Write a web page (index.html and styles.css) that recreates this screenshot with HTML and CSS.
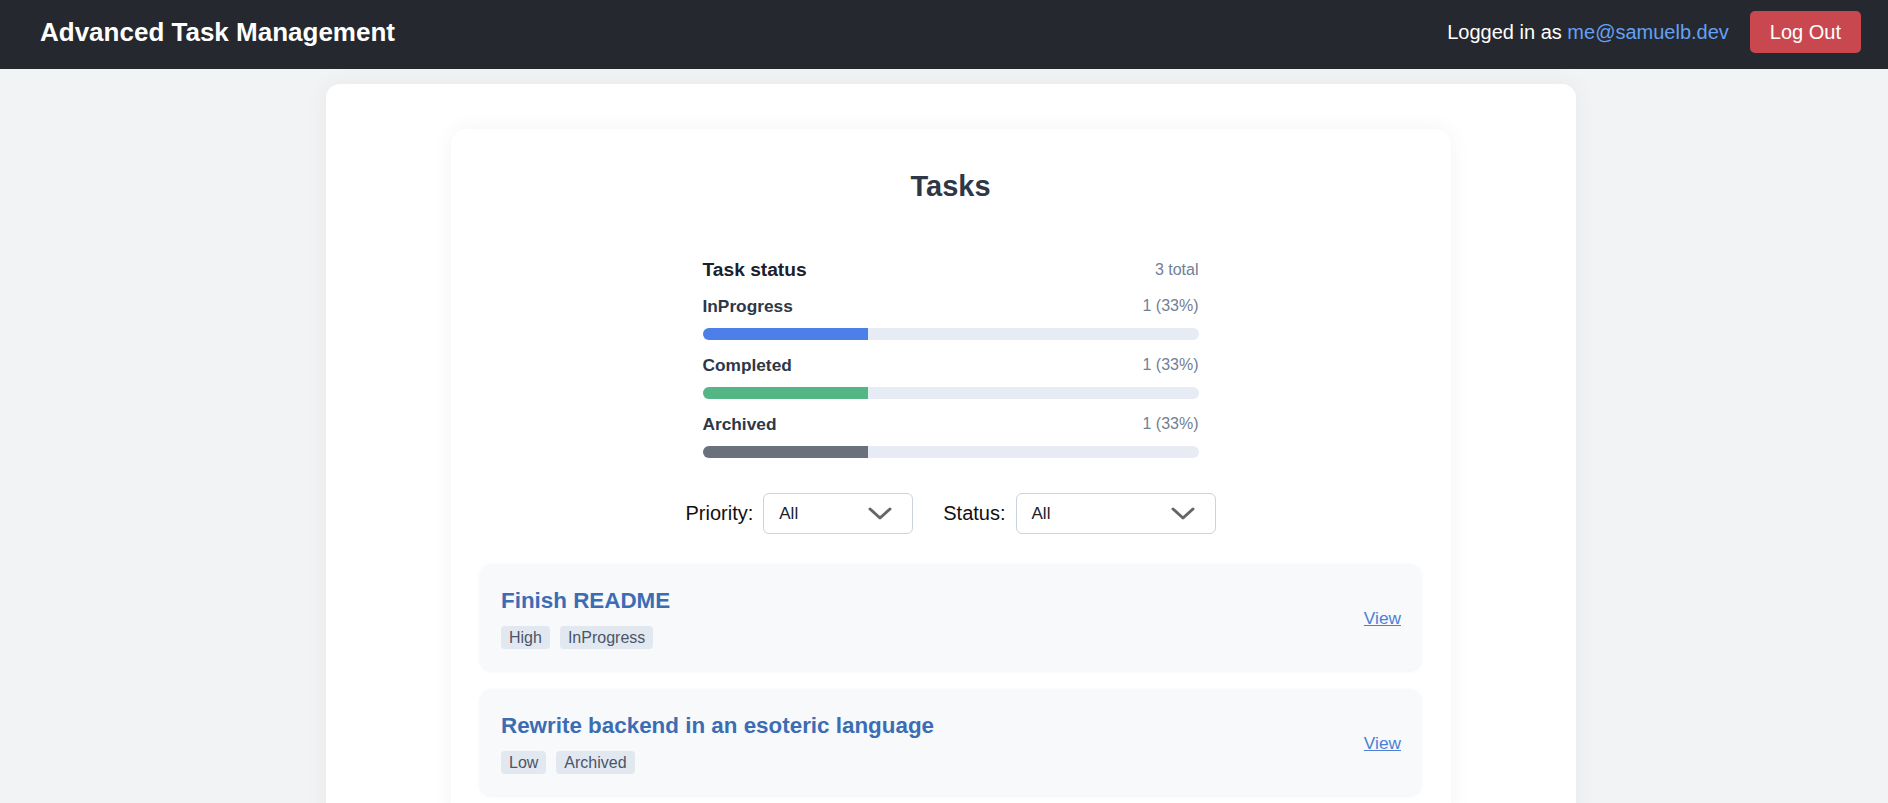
FILE: index.html
```html
<!DOCTYPE html>
<html lang="en">
<head>
<meta charset="utf-8">
<title>Advanced Task Management</title>
<link rel="stylesheet" href="styles.css">
</head>
<body>
<header class="topbar">
  <div class="brand">Advanced Task Management</div>
  <div class="account">
    <span class="user">Logged in as <span class="email">me@samuelb.dev</span></span>
    <button class="logout" type="button">Log Out</button>
  </div>
</header>

<main class="page">
  <section class="panel">
    <div class="card">
      <h1 class="title">Tasks</h1>

      <div class="status">
        <div class="status-head">
          <h2 class="status-title">Task status</h2>
          <span class="total">3 total</span>
        </div>
        <div class="row">
          <div class="row-label"><span class="row-name">InProgress</span><span class="row-count">1 (33%)</span></div>
          <div class="track"><div class="fill fill-blue" style="width:33.33%"></div></div>
        </div>
        <div class="row">
          <div class="row-label"><span class="row-name">Completed</span><span class="row-count">1 (33%)</span></div>
          <div class="track"><div class="fill fill-green" style="width:33.33%"></div></div>
        </div>
        <div class="row">
          <div class="row-label"><span class="row-name">Archived</span><span class="row-count">1 (33%)</span></div>
          <div class="track"><div class="fill fill-gray" style="width:33.33%"></div></div>
        </div>
      </div>

      <div class="filters">
        <label class="filter">Priority:
          <span class="select select-sm" role="combobox"><span>All</span>
            <svg class="chev" width="24" height="13" viewBox="0 0 24 13"><polyline points="2,2 12,11 22,2" fill="none" stroke="#666" stroke-width="3" stroke-linecap="round" stroke-linejoin="round"/></svg>
          </span>
        </label>
        <label class="filter">Status:
          <span class="select select-lg" role="combobox"><span>All</span>
            <svg class="chev" width="24" height="13" viewBox="0 0 24 13"><polyline points="2,2 12,11 22,2" fill="none" stroke="#666" stroke-width="3" stroke-linecap="round" stroke-linejoin="round"/></svg>
          </span>
        </label>
      </div>

      <div class="tasks">
        <div class="task">
          <div class="task-main">
            <h3 class="task-title">Finish README</h3>
            <div class="tags"><span class="tag">High</span><span class="tag">InProgress</span></div>
          </div>
          <a class="view" href="#">View</a>
        </div>
        <div class="task">
          <div class="task-main">
            <h3 class="task-title">Rewrite backend in an esoteric language</h3>
            <div class="tags"><span class="tag">Low</span><span class="tag">Archived</span></div>
          </div>
          <a class="view" href="#">View</a>
        </div>
      </div>
    </div>
  </section>
</main>
</body>
</html>
```

FILE: styles.css
```css
body {
  margin: 0;
  font-family: "Liberation Sans", Arial, sans-serif;
  background: #f2f3f5;
  color: #1a202c;
}

.topbar {
  height: 69px;
  box-sizing: border-box;
  padding: 11px 27px 16px 40px;
  display: flex;
  align-items: center;
  justify-content: space-between;
  background: #25282e;
  color: #fff;
}

.brand {
  font-size: 26px;
  font-weight: bold;
  line-height: 30px;
}

.account {
  display: flex;
  align-items: center;
  gap: 21px;
  font-size: 20px;
}

.email {
  color: #64a0f4;
}

.logout {
  background: #c9484f;
  color: #fff;
  border: none;
  border-radius: 5px;
  padding: 9px 20px;
  font-family: inherit;
  font-size: 20px;
  line-height: 24px;
}

.page {
  padding: 15px 0 40px 14px;
}

.panel {
  max-width: 1250px;
  margin: 0 auto;
  background: #fff;
  border-radius: 14px;
  box-shadow: 0 0 24px rgba(0, 0, 0, 0.05);
  padding: 45px 0 40px;
}

.card {
  width: 1000px;
  margin: 0 auto;
  box-sizing: border-box;
  background: #fff;
  border-radius: 16px;
  box-shadow: 0 0 22px rgba(0, 0, 0, 0.05);
  padding: 41px 30px 30px 29px;
}

.title {
  margin: 0;
  text-align: center;
  font-size: 29px;
  line-height: 33px;
  font-weight: bold;
  color: #2d3748;
}

.status {
  width: 496px;
  margin: 56px auto 0;
}

.status-head {
  display: flex;
  justify-content: space-between;
  align-items: center;
  line-height: 22px;
  margin-bottom: 15px;
}

.status-title {
  margin: 0;
  font-size: 19.2px;
  font-weight: bold;
  color: #1a202c;
}

.total {
  font-size: 16px;
  color: #718096;
}

.row + .row {
  margin-top: 15.5px;
}

.row-label {
  display: flex;
  justify-content: space-between;
  align-items: center;
  line-height: 20px;
  margin-bottom: 11.5px;
}

.row-name {
  font-size: 17.3px;
  font-weight: bold;
  color: #2d3748;
}

.row-count {
  font-size: 16px;
  color: #718096;
}

.track {
  height: 12px;
  background: #e6ebf4;
  border-radius: 6px;
  overflow: hidden;
}

.fill {
  height: 100%;
}

.fill-blue { background: #4c80e8; }
.fill-green { background: #53b684; }
.fill-gray { background: #6b707d; }

.filters {
  display: flex;
  justify-content: center;
  align-items: center;
  gap: 30px;
  margin-top: 35px;
}

.filter {
  display: flex;
  align-items: center;
  gap: 10px;
  font-size: 20px;
  color: #111;
}

.select {
  box-sizing: border-box;
  height: 41px;
  display: flex;
  align-items: center;
  justify-content: space-between;
  padding: 1px 20px 0 15px;
  border: 1px solid #ccd3dd;
  border-radius: 6px;
  background: #fff;
  font-size: 17px;
  color: #1a202c;
}

.select-sm { width: 150px; }
.select-lg { width: 200px; }

.chev {
  display: block;
}

.tasks {
  margin-top: 30px;
  display: flex;
  flex-direction: column;
  gap: 19px;
}

.task {
  display: flex;
  align-items: center;
  justify-content: space-between;
  padding: 24px 20px 21px 21px;
  background: #f7f9fb;
  border-radius: 12px;
  box-shadow: 0 1px 4px rgba(0, 0, 0, 0.06);
}

.task-title {
  margin: 0 0 12px;
  font-size: 22.4px;
  font-weight: bold;
  color: #3c6db4;
}

.tags {
  display: flex;
  gap: 10px;
}

.tag {
  font-size: 16px;
  line-height: 19px;
  padding: 2px 8px;
  background: #e2e8f0;
  color: #4a5568;
  border-radius: 4px;
}

.view {
  font-size: 17.3px;
  color: #4b80d6;
  text-decoration: underline;
}
```
